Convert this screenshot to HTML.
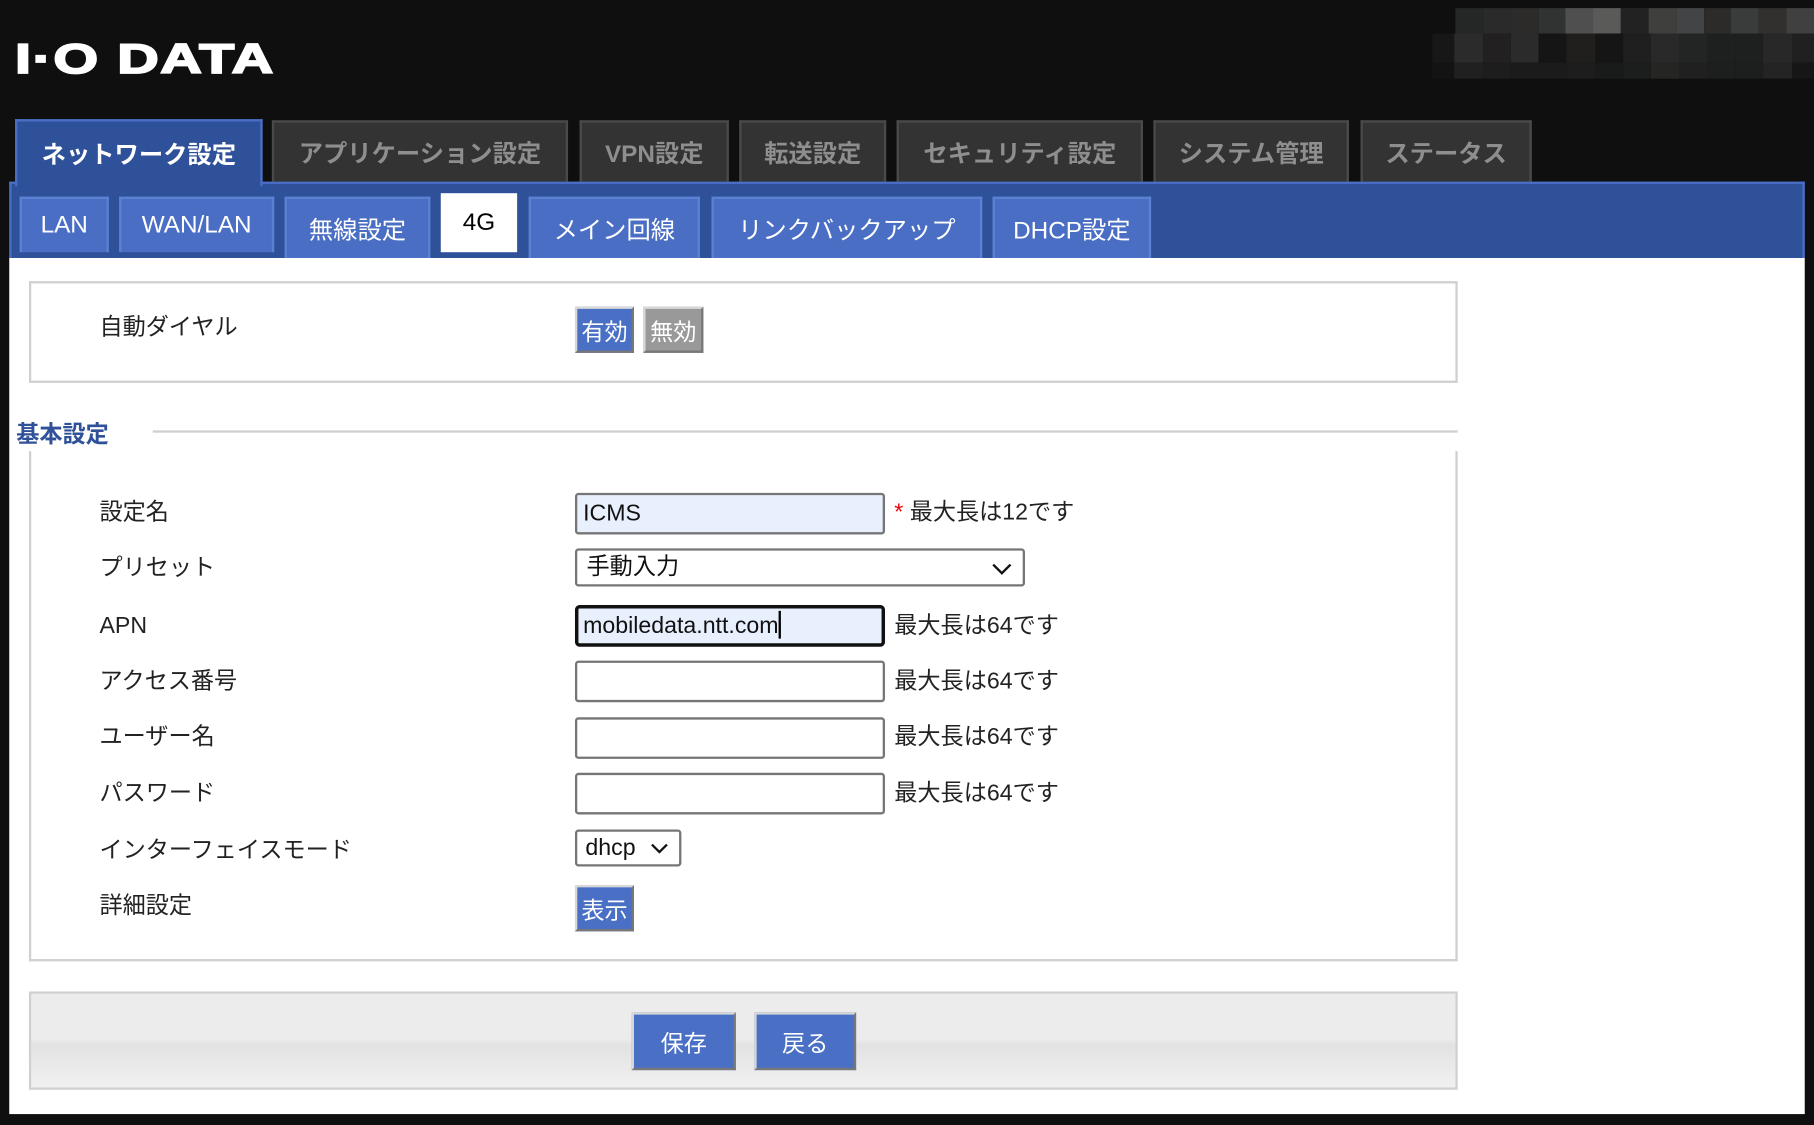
<!DOCTYPE html>
<html><head><meta charset="utf-8">
<style>
html,body{margin:0;padding:0;background:#0f0f0f;width:1814px;height:1125px;overflow:hidden}
#w{position:absolute;left:0;top:0;width:1568px;height:972px;transform:scale(1.15689);transform-origin:0 0;font-family:"Liberation Sans","Noto Sans CJK JP",sans-serif}
.a{position:absolute;box-sizing:border-box}
.px{position:absolute;height:0}
.mt{position:absolute;top:104px;height:53px;background:#333;border:2px solid #4a4a4a;border-bottom:none;color:#8e8e8e;font-weight:bold;font-size:21px;display:flex;align-items:center;justify-content:center;box-sizing:border-box}
.st{position:absolute;top:170px;height:50px;background:#4a6ec4;border:2px solid #5b82d2;border-bottom:none;color:#fff;font-size:21px;display:flex;align-items:center;justify-content:center;box-sizing:border-box}
.lb{position:absolute;left:86px;font-size:20px;color:#222;line-height:24px}
.in{position:absolute;left:497px;width:268px;height:36px;border:2px solid #767676;border-radius:3px;background:#fff;box-sizing:border-box;font-size:20px;padding-left:5px;line-height:32px;color:#111}
.nt{position:absolute;left:773px;font-size:20px;color:#222;line-height:24px}
.bt{position:absolute;background:#4a70c6;color:#fff;font-size:20px;border:2px solid;border-color:#d8d8d8 #777 #777 #d8d8d8;display:flex;align-items:center;justify-content:center;box-sizing:border-box}
</style></head><body><div id="w">
<div class="a" style="left:13px;top:33px;color:#fff;font-family:'Liberation Sans',sans-serif;font-weight:900;font-size:36px;line-height:36px;transform:scaleX(1.38);transform-origin:0 0;-webkit-text-stroke:1.5px #fff;letter-spacing:1px;white-space:nowrap">I·O DATA</div>
<!-- pixelated block -->
<div class="a" style="left:1258px;top:7px;height:22px;width:310px;display:flex">
<i style="flex:1;background:#252726"></i><i style="flex:1;background:#2a2a2a"></i><i style="flex:1;background:#2c2b29"></i><i style="flex:1;background:#303332"></i><i style="flex:1;background:#504f4f"></i><i style="flex:1;background:#5a5a58"></i><i style="flex:1;background:#222"></i><i style="flex:1;background:#3f3f3d"></i><i style="flex:1;background:#434446"></i><i style="flex:1;background:#2d2b29"></i><i style="flex:1;background:#3a3c3b"></i><i style="flex:1;background:#32302e"></i><i style="flex:1;background:#404040"></i></div>
<div class="a" style="left:1238px;top:29px;height:25px;width:330px;display:flex">
<i style="flex:0.8;background:#171717"></i><i style="flex:1;background:#2b2b2b"></i><i style="flex:1;background:#222021"></i><i style="flex:1;background:#2b2b2b"></i><i style="flex:1;background:#151515"></i><i style="flex:1;background:#201f1d"></i><i style="flex:1;background:#151515"></i><i style="flex:1;background:#1f1f1f"></i><i style="flex:1;background:#292929"></i><i style="flex:1;background:#232524"></i><i style="flex:1;background:#1e201f"></i><i style="flex:1;background:#1e1f1f"></i><i style="flex:1;background:#282828"></i><i style="flex:0.8;background:#202020"></i></div>
<div class="a" style="left:1238px;top:54px;height:14px;width:330px;display:flex">
<i style="flex:0.8;background:#131313"></i><i style="flex:1;background:#202020"></i><i style="flex:1;background:#1e1d1e"></i><i style="flex:1;background:#1b1b1b"></i><i style="flex:1;background:#1b1b1b"></i><i style="flex:1;background:#1d1d1d"></i><i style="flex:1;background:#191b1a"></i><i style="flex:1;background:#1c1e1d"></i><i style="flex:1;background:#252523"></i><i style="flex:1;background:#202020"></i><i style="flex:1;background:#1d1f1e"></i><i style="flex:1;background:#1d1f1e"></i><i style="flex:1;background:#242424"></i><i style="flex:0.8;background:#161616"></i></div>

<div class="mt" style="left:13px;width:214px;top:103px;height:58px;background:#2f5199;border-color:#4a6ec4;color:#fff;z-index:2">ネットワーク設定</div>
<div class="mt" style="left:235px;width:256px">アプリケーション設定</div>
<div class="mt" style="left:501px;width:129px">VPN設定</div>
<div class="mt" style="left:639px;width:127px">転送設定</div>
<div class="mt" style="left:775px;width:213px">セキュリティ設定</div>
<div class="mt" style="left:997px;width:169px">システム管理</div>
<div class="mt" style="left:1176px;width:148px">ステータス</div>

<div class="a" style="left:8px;top:157px;width:1552px;height:66px;background:#2f5199;border:2px solid #4a6ec4;border-bottom:none"></div>
<div class="st" style="left:17px;width:77px;height:48px">LAN</div>
<div class="st" style="left:103px;width:134px;height:48px">WAN/LAN</div>
<div class="st" style="left:246px;width:126px;height:53px">無線設定</div>
<div class="st" style="left:381px;width:66px;top:167px;height:51px;background:#fff;border:none;color:#000">4G</div>
<div class="st" style="left:457px;width:148px;height:53px">メイン回線</div>
<div class="st" style="left:615px;width:234px;height:53px">リンクバックアップ</div>
<div class="st" style="left:858px;width:137px;height:53px">DHCP設定</div>

<div class="a" style="left:8px;top:223px;width:1552px;height:740px;background:#fff"></div>

<div class="a" style="left:25px;top:243px;width:1235px;height:88px;border:2px solid #d0d0d0"></div>
<div class="lb" style="top:271px">自動ダイヤル</div>
<div class="bt" style="left:497px;top:265px;width:51px;height:40px">有効</div>
<div class="bt" style="left:556px;top:265px;width:52px;height:40px;background:#999;color:#fff">無効</div>

<div class="a" style="left:14px;top:359px;font-size:20px;font-weight:bold;color:#2f5199">基本設定</div>
<div class="a" style="left:132px;top:372px;width:1128px;height:2px;background:#d0d0d0"></div>
<div class="a" style="left:25px;top:390px;width:1235px;height:441px;border:2px solid #d0d0d0;border-top:none"></div>

<div class="lb" style="top:431px">設定名</div>
<div class="in" style="top:426px;background:#e8f0fe">ICMS</div>
<div class="a" style="left:773px;top:431px;font-size:20px;line-height:24px;color:#222"><span style="color:#e00">*</span> 最大長は12です</div>

<div class="lb" style="top:479px">プリセット</div>
<div class="in" style="top:474px;width:389px;height:33px;line-height:29px;padding-left:8px">手動入力
<svg style="position:absolute;right:9px;top:10px" width="18" height="12" viewBox="0 0 18 12"><path d="M1.5 2 L9 9.5 L16.5 2" fill="none" stroke="#111" stroke-width="2"/></svg></div>

<div class="lb" style="top:529px">APN</div>
<div class="in" style="top:523px;height:36px;background:#e8f0fe;border:3px solid #111;border-radius:4px;padding-left:4px;line-height:30px">mobiledata.ntt.com<span style="display:inline-block;width:2px;height:24px;background:#000;vertical-align:-5px"></span></div>
<div class="nt" style="top:529px">最大長は64です</div>

<div class="lb" style="top:577px">アクセス番号</div>
<div class="in" style="top:571px"></div>
<div class="nt" style="top:577px">最大長は64です</div>

<div class="lb" style="top:625px">ユーザー名</div>
<div class="in" style="top:620px"></div>
<div class="nt" style="top:625px">最大長は64です</div>

<div class="lb" style="top:674px">パスワード</div>
<div class="in" style="top:668px"></div>
<div class="nt" style="top:674px">最大長は64です</div>

<div class="lb" style="top:723px">インターフェイスモード</div>
<div class="in" style="top:717px;width:92px;height:32px;line-height:28px;padding-left:7px">dhcp
<svg style="position:absolute;right:9px;top:9px" width="16" height="11" viewBox="0 0 16 11"><path d="M1.5 2 L8 8.5 L14.5 2" fill="none" stroke="#111" stroke-width="2"/></svg></div>

<div class="lb" style="top:771px">詳細設定</div>
<div class="bt" style="left:497px;top:765px;width:51px;height:40px">表示</div>

<div class="a" style="left:25px;top:857px;width:1235px;height:85px;border:2px solid #d0d0d0;background:linear-gradient(#ececec 0%,#ececec 48%,#e2e2e2 55%,#e8e8e8 72%,#f0f0f0 100%)"></div>
<div class="bt" style="left:546px;top:875px;width:90px;height:50px">保存</div>
<div class="bt" style="left:652px;top:875px;width:88px;height:50px">戻る</div>
</div></body></html>
